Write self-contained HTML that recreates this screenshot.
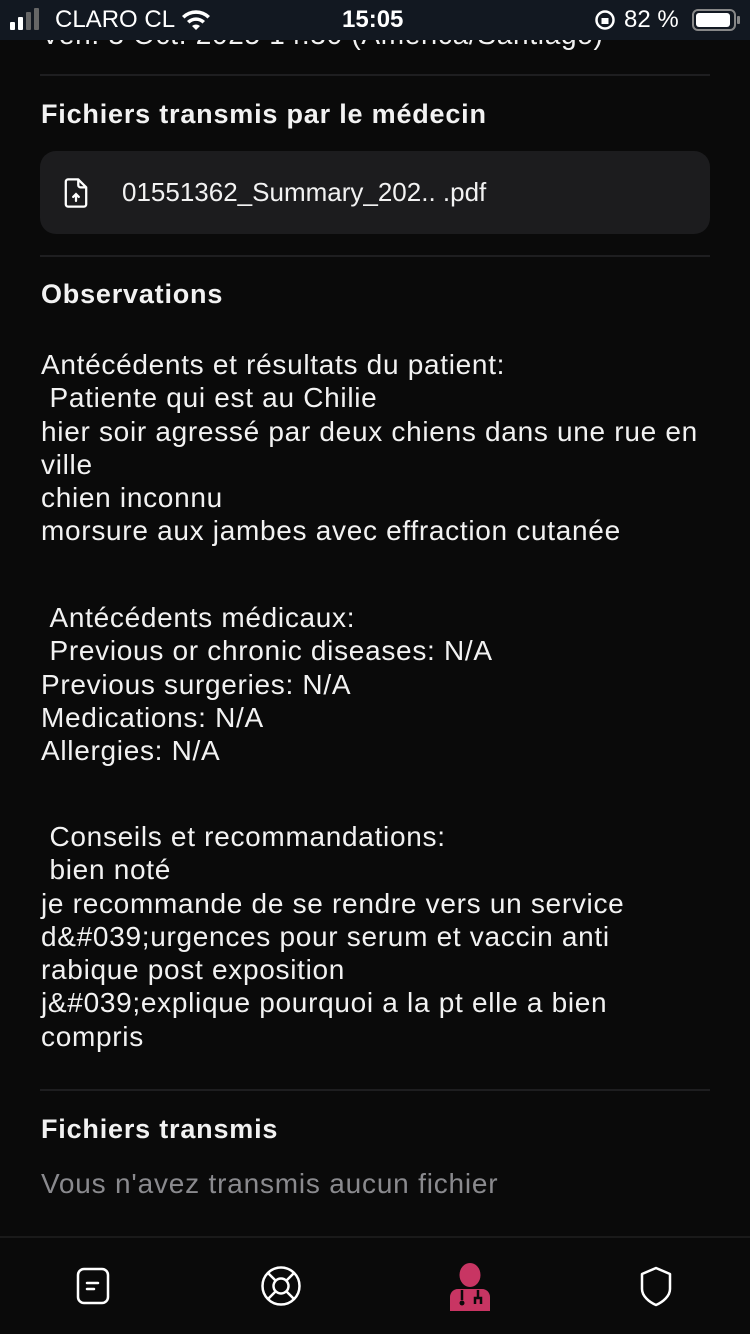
<!DOCTYPE html>
<html><head><meta charset="utf-8"><style>
*{margin:0;padding:0;box-sizing:border-box}
body{width:750px;height:1334px;background:#0a0a0a;color:#f2f2f2;font-family:"Liberation Sans",sans-serif;position:relative;overflow:hidden}
.a{position:absolute;left:41px;white-space:nowrap}
.t{font-size:28px;line-height:33.3px;letter-spacing:0.7px}
.h{font-size:27px;font-weight:bold;line-height:33px;letter-spacing:0.8px}
.hr{position:absolute;left:40px;width:670px;height:2px;background:#1e1e20}
.sb{position:absolute;left:0;top:0;width:750px;height:40px;background:#121821;color:#fff;font-size:24px}
</style></head><body>
<div class="a t" style="top:18px">Ven. 3 Oct. 2025 14:30 (America/Santiago)</div>
<div class="sb">
 <div style="position:absolute;left:10px;top:22px;width:5px;height:8px;background:#fff;border-radius:1px"></div>
 <div style="position:absolute;left:18px;top:17px;width:5px;height:13px;background:#fff;border-radius:1px"></div>
 <div style="position:absolute;left:26px;top:12px;width:5px;height:18px;background:#666;border-radius:1px"></div>
 <div style="position:absolute;left:34px;top:8px;width:5px;height:22px;background:#666;border-radius:1px"></div>
 <div style="position:absolute;left:55px;top:6px">CLARO CL</div>
 <svg style="position:absolute;left:180px;top:8px" width="32" height="24" viewBox="0 0 32 24"><path d="M16 22l-4-4a6 6 0 0 1 8 0zM7 13a13 13 0 0 1 18 0l-2.5 2.5a9.5 9.5 0 0 0-13 0zM2 8a20 20 0 0 1 28 0l-2.5 2.5a16.5 16.5 0 0 0-23 0z" fill="#fff"/></svg>
 <div style="position:absolute;left:342px;top:6px;font-weight:bold">15:05</div>
 <svg style="position:absolute;left:594px;top:9px" width="22" height="22" viewBox="0 0 22 22"><circle cx="11" cy="11" r="8.5" fill="none" stroke="#fff" stroke-width="2.5"/><rect x="7.5" y="9" width="7" height="6" fill="#fff"/></svg>
 <div style="position:absolute;left:624px;top:6px">82 %</div>
 <div style="position:absolute;left:692px;top:9px;width:44px;height:22px;border:2px solid #888;border-radius:6px;padding:2px"><div style="width:34px;height:14px;background:#fff;border-radius:3px"></div></div>
 <div style="position:absolute;left:737px;top:16px;width:3px;height:8px;background:#888;border-radius:1px"></div>
</div>
<div class="hr" style="top:74px"></div>
<div class="a h" style="top:98px">Fichiers transmis par le médecin</div>
<div style="position:absolute;left:40px;top:151px;width:670px;height:83px;background:#1c1c1e;border-radius:16px"></div>
<svg style="position:absolute;left:59px;top:176px" width="34" height="34" viewBox="0 0 30 30"><path d="M8 3h9l7 7v15a2 2 0 0 1-2 2H8a2 2 0 0 1-2-2V5a2 2 0 0 1 2-2z M17 3v5a2 2 0 0 0 2 2h5" fill="none" stroke="#fff" stroke-width="2" stroke-linejoin="round"/><path d="M15 22v-6M12.5 18.5L15 16l2.5 2.5" fill="none" stroke="#fff" stroke-width="2" stroke-linecap="round"/></svg>
<div class="a" style="left:122px;top:176px;font-size:26px;line-height:33px">01551362_Summary_202.. .pdf</div>
<div class="hr" style="top:255px"></div>
<div class="a h" style="top:278px">Observations</div>
<div class="a t" style="top:348px">Antécédents et résultats du patient:<br>&nbsp;Patiente qui est au Chilie<br>hier soir agressé par deux chiens dans une rue en<br>ville<br>chien inconnu<br>morsure aux jambes avec effraction cutanée</div>
<div class="a t" style="top:601px">&nbsp;Antécédents médicaux:<br>&nbsp;Previous or chronic diseases: N/A<br>Previous surgeries: N/A<br>Medications: N/A<br>Allergies: N/A</div>
<div class="a t" style="top:820px">&nbsp;Conseils et recommandations:<br>&nbsp;bien noté<br>je recommande de se rendre vers un service<br>d&amp;#039;urgences pour serum et vaccin anti<br>rabique post exposition<br>j&amp;#039;explique pourquoi a la pt elle a bien<br>compris</div>
<div class="hr" style="top:1089px"></div>
<div class="a h" style="top:1113px">Fichiers transmis</div>
<div class="a t" style="top:1167px;color:#8a8a8e;letter-spacing:0.8px">Vous n'avez transmis aucun fichier</div>
<div style="position:absolute;left:0;top:1236px;width:750px;height:2px;background:#1a1a1a"></div>
<svg style="position:absolute;left:75px;top:1266px" width="36" height="40" viewBox="0 0 36 40"><rect x="3" y="3" width="30" height="34" rx="6" fill="none" stroke="#fff" stroke-width="2.5"/><path d="M12 17h11M12 23h7" stroke="#fff" stroke-width="2.5" stroke-linecap="round"/></svg>
<svg style="position:absolute;left:259px;top:1264px" width="44" height="44" viewBox="0 0 44 44"><circle cx="22" cy="22" r="18.5" fill="none" stroke="#fff" stroke-width="2.5"/><circle cx="22" cy="22" r="7.5" fill="none" stroke="#fff" stroke-width="2.5"/><path d="M9 9l8 8M35 9l-8 8M9 35l8-8M35 35l-8-8" stroke="#fff" stroke-width="2.5"/></svg>
<svg style="position:absolute;left:448px;top:1263px" width="44" height="48" viewBox="0 0 44 48"><ellipse cx="22" cy="12" rx="10.5" ry="12" fill="#c83563"/><path d="M2 48v-14c0-4 3-8 8-8h24c5 0 8 4 8 8v14z" fill="#c83563"/><path d="M14 27v10M30 27v8m-3 6v-6h6v6" stroke="#0a0a0a" stroke-width="2.5" fill="none"/><circle cx="14" cy="40" r="2.5" fill="#0a0a0a"/></svg>
<svg style="position:absolute;left:638px;top:1265px" width="36" height="42" viewBox="0 0 36 42"><path d="M18 3l14 6v15c0 7-7 13-14 16C11 37 4 31 4 24V9z" fill="none" stroke="#fff" stroke-width="2.5" stroke-linejoin="round"/></svg>
</body></html>
